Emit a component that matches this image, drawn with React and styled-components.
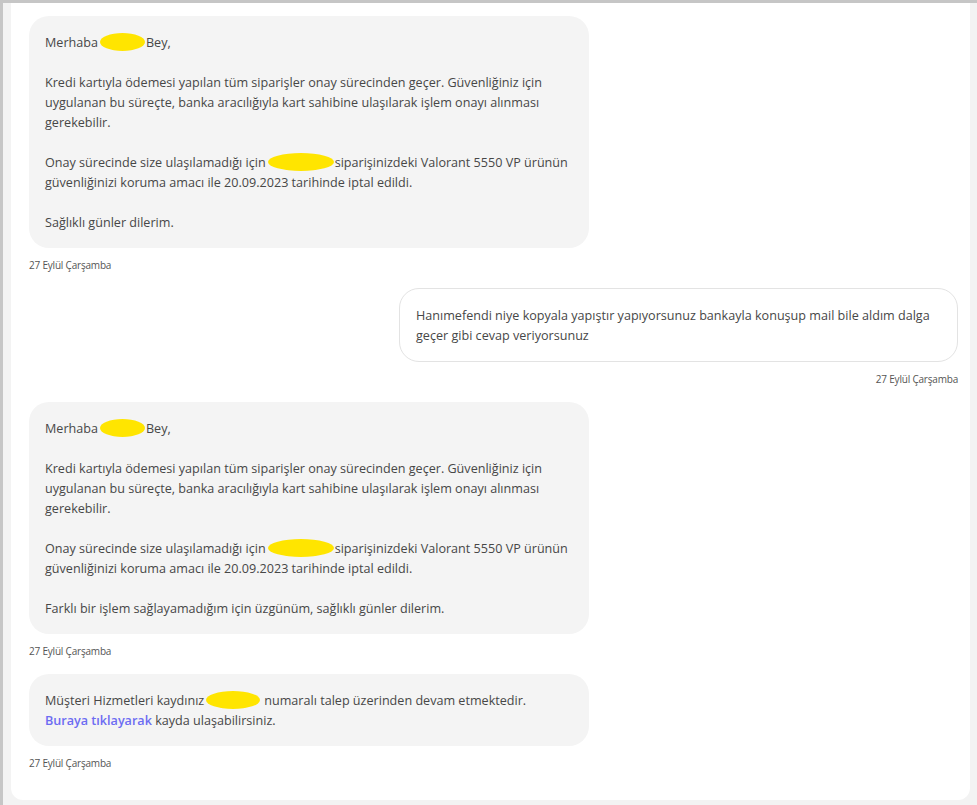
import React from "react";
import styled, { createGlobalStyle } from "styled-components";

const GlobalStyle = createGlobalStyle`
  html, body {
    margin: 0;
    padding: 0;
    background: #f3f3f3;
  }
  body {
    font-family: "Open Sans", "Noto Sans", sans-serif;
  }
`;

const Frame = styled.div`
  height: 805px;
  box-sizing: border-box;
  border-top: 3px solid #c6c6c6;
  border-left: 3px solid #c6c6c6;
  padding: 0 7px 5px 8px;
  overflow: hidden;
`;

const Panel = styled.div`
  background: #fff;
  height: 100%;
  box-sizing: border-box;
  border-radius: 0 0 12px 12px;
  padding: 13px 12px 0 18px;
  display: flex;
  flex-direction: column;
  gap: 16px;
`;

const Group = styled.div`
  display: flex;
  flex-direction: column;
  align-items: ${(p) => (p.$mine ? "flex-end" : "flex-start")};
`;

const Bubble = styled.div`
  box-sizing: border-box;
  width: ${(p) => (p.$mine ? "559px" : "560px")};
  padding: 17px 10px 15px 16px;
  border-radius: 20px;
  background: ${(p) => (p.$mine ? "#fff" : "#f4f4f4")};
  border: ${(p) => (p.$mine ? "1px solid #e3e3e3" : "none")};
  color: #474747;
  font-size: 12.6px;
  line-height: 20px;
`;

const Para = styled.p`
  margin: 0 0 20px;
  &:last-child {
    margin-bottom: 0;
  }
`;

const Redact = styled.span`
  display: inline-block;
  vertical-align: top;
  width: ${(p) => p.$w}px;
  height: ${(p) => p.$h || 18}px;
  margin: 0 ${(p) => p.$gap || 1}px 0 2px;
  background: #ffe500;
  border-radius: 50%;
`;

const Link = styled.a`
  color: #6c6cf2;
  font-weight: 600;
  text-decoration: none;
`;

const Stamp = styled.div`
  margin-top: 10px;
  font-size: 10px;
  line-height: 14px;
  color: #555;
  letter-spacing: -0.2px;
`;

const Message = ({ mine, children }) => (
  <Group $mine={mine}>
    <Bubble $mine={mine}>{children}</Bubble>
    <Stamp>27 Eylül Çarşamba</Stamp>
  </Group>
);

const Reply = ({ closing }) => (
  <Message>
    <Para>
      Merhaba<Redact $w={45} />Bey,
    </Para>
    <Para>
      Kredi kartıyla ödemesi yapılan tüm siparişler onay sürecinden geçer.
      Güvenliğiniz için uygulanan bu süreçte, banka aracılığıyla kart sahibine
      ulaşılarak işlem onayı alınması gerekebilir.
    </Para>
    <Para>
      Onay sürecinde size ulaşılamadığı için<Redact $w={66} />
      siparişinizdeki Valorant 5550 VP ürünün güvenliğinizi koruma amacı ile
      20.09.2023 tarihinde iptal edildi.
    </Para>
    <Para>{closing}</Para>
  </Message>
);

export default function App() {
  return (
    <>
      <GlobalStyle />
      <Frame>
        <Panel>
          <Reply closing="Sağlıklı günler dilerim." />
          <Message mine>
            Hanımefendi niye kopyala yapıştır yapıyorsunuz bankayla konuşup mail
            bile aldım dalga geçer gibi cevap veriyorsunuz
          </Message>
          <Reply closing="Farklı bir işlem sağlayamadığım için üzgünüm, sağlıklı günler dilerim." />
          <Message>
            Müşteri Hizmetleri kaydınız<Redact $w={54} $gap={4} />numaralı
            talep üzerinden devam etmektedir.
            <br />
            <Link>Buraya tıklayarak</Link> kayda ulaşabilirsiniz.
          </Message>
        </Panel>
      </Frame>
    </>
  );
}
